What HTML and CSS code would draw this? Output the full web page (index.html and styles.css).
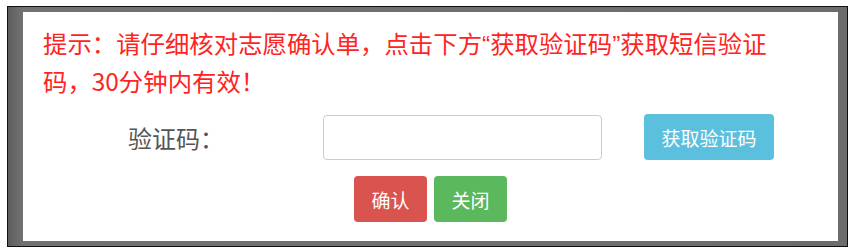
FILE: index.html
```html
<!DOCTYPE html>
<html lang="zh-CN">
<head>
<meta charset="utf-8">
<title>提示</title>
<link rel="stylesheet" href="styles.css">
</head>
<body>
<div class="frame">
  <div class="dialog">
    <p class="notice">提示：请仔细核对志愿确认单，点击下方<span class="q">“</span>获取验证码<span class="q">”</span>获取短信验证<br>码，30分钟内有效！</p>
    <div class="form-row">
      <label class="label" for="code">验证码：</label>
      <input class="input" id="code" type="text">
      <button class="btn btn-info" type="button">获取验证码</button>
    </div>
    <div class="actions">
      <button class="btn btn-danger" type="button">确认</button>
      <button class="btn btn-success" type="button">关闭</button>
    </div>
  </div>
</div>
</body>
</html>
```

FILE: styles.css
```css
html, body {
  margin: 0;
  padding: 0;
  background: #ffffff;
}

body {
  font-family: "Noto Sans CJK SC", "Noto Sans", sans-serif;
}

.frame {
  box-sizing: border-box;
  margin: 6px 0 0 7px;
  width: 841px;
  height: 241px;
  border: 1px solid #111;
  background: linear-gradient(90deg, #5e5e5e 0, #727272 15px, #6c6c6c 100%);
  padding: 5px 9px 5px 15px;
}

.dialog {
  box-sizing: border-box;
  height: 100%;
  background: #ffffff;
  padding: 13px 0 0 20px;
}

.notice {
  margin: 0;
  width: 760px;
  font-size: 24.4px;
  line-height: 36px;
  color: #ff2424;
}

.q {
  font-family: "Liberation Sans", sans-serif;
}

.form-row {
  display: flex;
  align-items: center;
  margin: 15px 0 0 -20px;
  height: 46px;
}

.label {
  width: 306px;
  text-align: center;
  font-size: 24px;
  color: #555;
  margin-right: -6px;
}

.input {
  box-sizing: border-box;
  width: 279px;
  height: 45px;
  border: 1px solid #ccc;
  border-radius: 4px;
  margin: 0;
  padding: 6px 12px;
  font-size: 18px;
  background: #fff;
}

.btn {
  box-sizing: border-box;
  border: 0;
  border-radius: 4px;
  margin: 0;
  height: 46px;
  padding: 0;
  color: #fff;
  font-family: "Noto Sans CJK SC", "Noto Sans", sans-serif;
  font-size: 19px;
  cursor: pointer;
}

.btn-info {
  width: 130px;
  margin-left: 42px;
  background: #5bc0de;
}

.actions {
  display: flex;
  justify-content: center;
  gap: 7px;
  margin: 16px 0 0 -20px;
}

.btn-danger {
  width: 73px;
  background: #d9534f;
}

.btn-success {
  width: 73px;
  background: #5cb85c;
}
```
